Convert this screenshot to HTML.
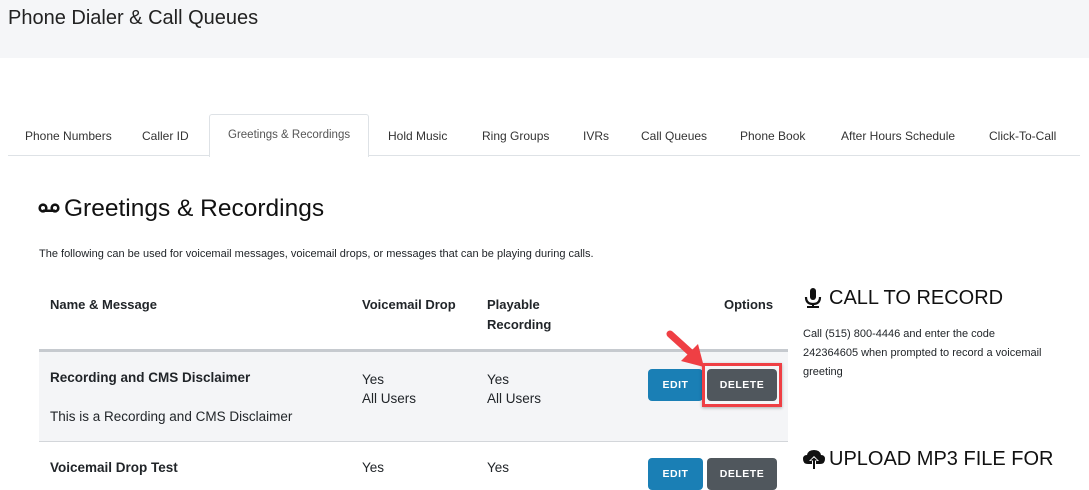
<!DOCTYPE html>
<html><head><style>
*{margin:0;padding:0;box-sizing:border-box}
body{width:1089px;height:478px;overflow:hidden;background:#fff;font-family:"Liberation Sans",sans-serif;color:#212529;position:relative}
.a{position:absolute;white-space:nowrap}
.tab{position:absolute;top:129px;font-size:12px;color:#333}
.b{font-weight:bold}
.btn{position:absolute;height:32px;border-radius:4px;color:#fff;font-size:10.5px;font-weight:bold;letter-spacing:.5px;text-align:center;line-height:32px}
</style></head><body>
<div class="a" style="left:0;top:0;width:1089px;height:58px;background:#f5f6f8"></div>
<div class="a" style="left:8px;top:7px;font-size:20px;color:#222">Phone Dialer &amp; Call Queues</div>

<div class="a" style="left:8px;top:155px;width:1072px;height:1px;background:#dee2e6"></div>
<div class="a" style="left:209px;top:114px;width:160px;height:43px;background:#fff;border:1px solid #dee2e6;border-bottom:none;border-radius:3px 3px 0 0"></div>
<div class="tab" style="left:25px">Phone Numbers</div>
<div class="tab" style="left:142px">Caller ID</div>
<div class="tab" style="left:228px;color:#555;font-size:11.5px">Greetings &amp; Recordings</div>
<div class="tab" style="left:388px">Hold Music</div>
<div class="tab" style="left:482px">Ring Groups</div>
<div class="tab" style="left:583px">IVRs</div>
<div class="tab" style="left:641px">Call Queues</div>
<div class="tab" style="left:740px">Phone Book</div>
<div class="tab" style="left:841px">After Hours Schedule</div>
<div class="tab" style="left:989px">Click-To-Call</div>

<svg class="a" style="left:38px;top:203px" width="22" height="10" viewBox="0 0 22 10"><circle cx="5" cy="5" r="3.3" fill="none" stroke="#111" stroke-width="2.6"/><circle cx="17" cy="5" r="3.3" fill="none" stroke="#111" stroke-width="2.6"/><rect x="5" y="6.5" width="12" height="2.5" fill="#111"/></svg>
<div class="a" style="left:64px;top:195px;font-size:24.5px;color:#111">Greetings &amp; Recordings</div>
<div class="a" style="left:39px;top:248px;font-size:11px">The following can be used for voicemail messages, voicemail drops, or messages that can be playing during calls.</div>

<div class="a b" style="left:50px;top:297px;font-size:13px">Name &amp; Message</div>
<div class="a b" style="left:362px;top:297px;font-size:13px">Voicemail Drop</div>
<div class="a b" style="left:487px;top:295px;font-size:13px;line-height:20px">Playable<br>Recording</div>
<div class="a b" style="left:724px;top:297px;font-size:13px">Options</div>

<div class="a" style="left:39px;top:349px;width:749px;height:3px;background:#c6cacf"></div>
<div class="a" style="left:39px;top:352px;width:749px;height:89px;background:#f4f5f7"></div>
<div class="a" style="left:39px;top:441px;width:749px;height:1px;background:#d3d6da"></div>
<div class="a b" style="left:50px;top:370px;font-size:13.5px">Recording and CMS Disclaimer</div>
<div class="a" style="left:50px;top:409px;font-size:13.5px">This is a Recording and CMS Disclaimer</div>
<div class="a" style="left:362px;top:370px;font-size:13.5px;line-height:19px">Yes<br>All Users</div>
<div class="a" style="left:487px;top:370px;font-size:13.5px;line-height:19px">Yes<br>All Users</div>
<div class="btn" style="left:648px;top:369px;width:55px;background:#1a7fb5">EDIT</div>
<div class="btn" style="left:707px;top:369px;width:70px;background:#50575d">DELETE</div>
<div class="a" style="left:702px;top:363px;width:80px;height:44px;border:3px solid #ef3f44;box-shadow:0 1px 3px rgba(0,0,0,.3)"></div>
<svg class="a" style="left:664px;top:328px" width="44" height="42" viewBox="0 0 44 42"><line x1="6" y1="6" x2="27" y2="25" stroke="#ef3f44" stroke-width="7" stroke-linecap="round"/><polygon points="40,39 17,33 34,16" fill="#ef3f44"/></svg>

<div class="a b" style="left:50px;top:460px;font-size:13.5px">Voicemail Drop Test</div>
<div class="a" style="left:362px;top:460px;font-size:13.5px">Yes</div>
<div class="a" style="left:487px;top:460px;font-size:13.5px">Yes</div>
<div class="btn" style="left:648px;top:458px;width:55px;background:#1a7fb5">EDIT</div>
<div class="btn" style="left:707px;top:458px;width:70px;background:#50575d">DELETE</div>

<svg class="a" style="left:804px;top:288px" width="18" height="20" viewBox="0 0 18 20"><rect x="6" y="0" width="6" height="12" rx="3" fill="#111"/><path d="M2 9 Q2 16 9 16 Q16 16 16 9" fill="none" stroke="#111" stroke-width="2.2"/><rect x="8" y="15" width="2" height="3" fill="#111"/><rect x="3" y="18" width="12" height="2" fill="#111"/></svg>
<div class="a" style="left:829px;top:287px;font-size:20px;color:#111">CALL TO RECORD</div>
<div class="a" style="left:803px;top:325px;font-size:11px;line-height:19px;white-space:normal;width:290px">Call (515) 800-4446 and enter the code<br>242364605 when prompted to record a voicemail<br>greeting</div>
<svg class="a" style="left:803px;top:449px" width="22" height="20" viewBox="0 0 22 20"><path d="M5 15 Q0 15 0 10 Q0 6 4 6 Q5 1 11 1 Q17 1 18 6 Q22 6 22 10 Q22 15 17 15Z" fill="#111"/><path d="M11 7 L6 12 H9 V20 H13 V12 H16Z" fill="#fff"/><path d="M11 8.5 L7.5 11.5 H10 V20 H12 V11.5 H14.5Z" fill="#111"/></svg>
<div class="a" style="left:829px;top:448px;font-size:20px;color:#111">UPLOAD MP3 FILE FOR</div>
</body></html>
